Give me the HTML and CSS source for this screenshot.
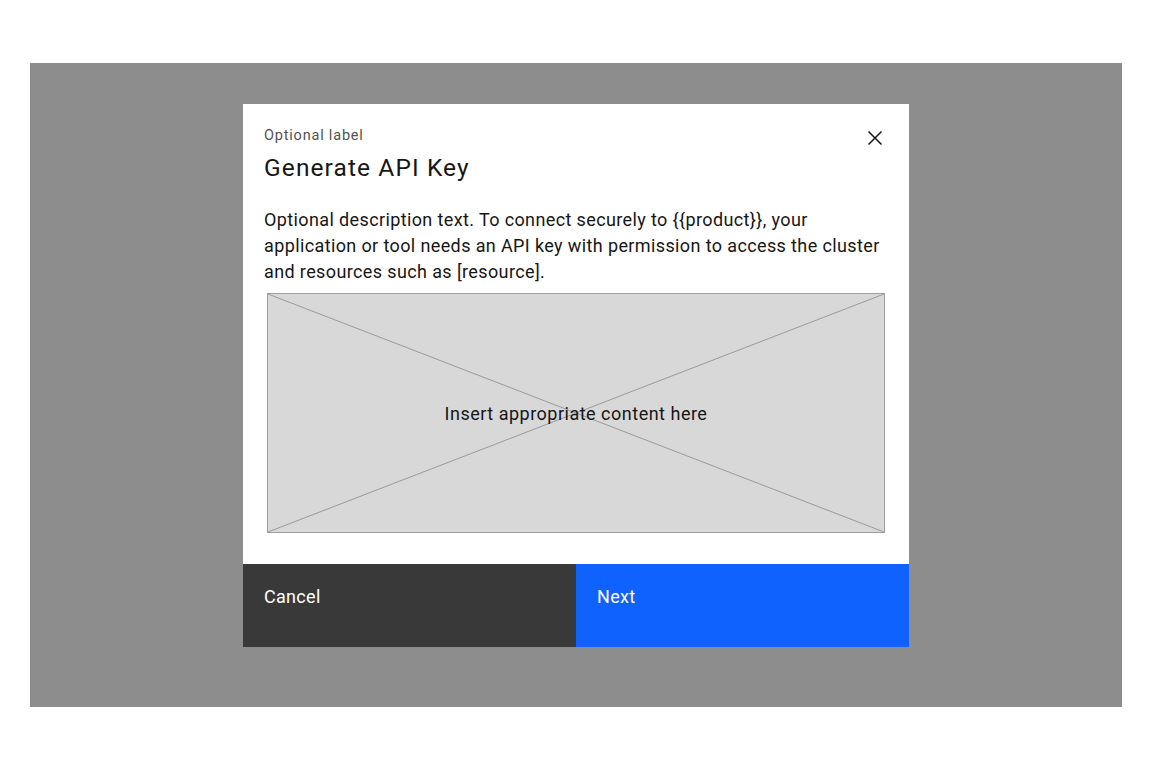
FILE: index.html
```html
<!DOCTYPE html>
<html lang="en">
<head>
    <meta charset="UTF-8">
    <title>Generate API Key</title>
    <link rel="stylesheet" href="styles.css">
</head>
<body>
    <div class="overlay">
        <div class="modal">
            <div class="modal-header">
                <div class="heading">
                    <div class="label">Optional label</div>
                    <h2 class="title">Generate API Key</h2>
                </div>
                <button class="close" aria-label="Close">
                    <svg width="16" height="16" viewBox="0 0 16 16">
                        <path d="M1.5 1.5 L14.5 14.5 M14.5 1.5 L1.5 14.5" stroke="#161616" stroke-width="1.5" fill="none"/>
                    </svg>
                </button>
            </div>
            <div class="modal-body">
                <p class="description">Optional description text. To connect securely to {{product}}, your application or tool needs an API key with permission to access the cluster and resources such as [resource].</p>
                <div class="placeholder">
                    <svg class="cross" viewBox="0 0 100 100" preserveAspectRatio="none">
                        <line x1="0" y1="0" x2="100" y2="100" stroke="#9a9a9a" stroke-width="1" vector-effect="non-scaling-stroke"/>
                        <line x1="100" y1="0" x2="0" y2="100" stroke="#9a9a9a" stroke-width="1" vector-effect="non-scaling-stroke"/>
                    </svg>
                    <span class="placeholder-text">Insert appropriate content here</span>
                </div>
            </div>
            <div class="modal-footer">
                <button class="btn btn-secondary">Cancel</button>
                <button class="btn btn-primary">Next</button>
            </div>
        </div>
    </div>
</body>
</html>
```

FILE: styles.css
```css
body {
    font-family: Roboto, "Liberation Sans", sans-serif;
    background-color: #fff;
    margin: 0;
    padding: 63px 30px 0;
}
.overlay {
    background-color: #8d8d8d;
    height: 644px;
    display: flex;
    justify-content: center;
    align-items: flex-start;
    padding-top: 41px;
    box-sizing: border-box;
}
.modal {
    background-color: #fff;
    width: 666px;
    display: flex;
    flex-direction: column;
}
.modal-header {
    display: flex;
    justify-content: space-between;
    align-items: flex-start;
    padding: 23px 26px 0 21px;
}
.label {
    font-size: 14.5px;
    line-height: 18px;
    color: #525252;
    letter-spacing: 0.8px;
}
.title {
    font-size: 24.5px;
    line-height: 32px;
    font-weight: 400;
    color: #161616;
    letter-spacing: 1.1px;
    margin: 7px 0 0;
}
.close {
    background: none;
    border: none;
    padding: 0;
    margin-top: 3px;
    width: 16px;
    height: 16px;
    cursor: pointer;
}
.close svg {
    display: block;
}
.modal-body {
    padding: 0 24px 0 21px;
}
.description {
    font-size: 18px;
    line-height: 26px;
    color: #161616;
    letter-spacing: 0.38px;
    margin: 23px 0 0;
}
.placeholder {
    position: relative;
    margin: 8px 0 0 3px;
    height: 240px;
    background-color: #d8d8d8;
    border: 1px solid #a0a0a0;
    box-sizing: border-box;
    display: flex;
    align-items: center;
    justify-content: center;
}
.cross {
    position: absolute;
    top: 0;
    left: 0;
    width: 100%;
    height: 100%;
}
.placeholder-text {
    position: relative;
    font-size: 18px;
    letter-spacing: 0.5px;
    color: #161616;
}
.modal-footer {
    display: flex;
    margin-top: 31px;
    height: 83px;
}
.btn {
    flex: 1;
    border: none;
    font-family: inherit;
    font-size: 18px;
    letter-spacing: 0.3px;
    color: #fff;
    text-align: left;
    padding: 22px 21px 0;
    display: flex;
    align-items: flex-start;
    cursor: pointer;
}
.btn-secondary {
    background-color: #393939;
}
.btn-primary {
    background-color: #0f62fe;
}
```
